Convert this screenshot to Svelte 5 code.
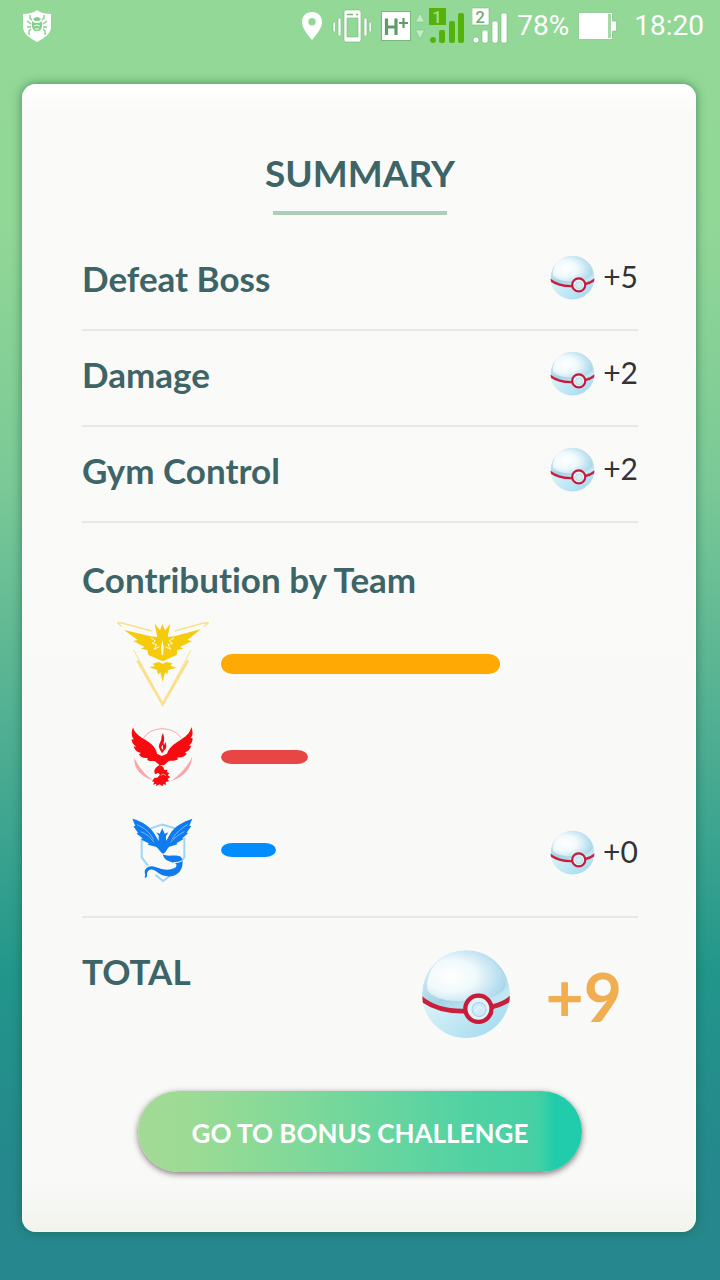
<script>
  const rewards = [
    { label: 'Defeat Boss', value: '+5' },
    { label: 'Damage', value: '+2' },
    { label: 'Gym Control', value: '+2' },
  ];
  const teams = [
    { name: 'instinct', share: 88, value: '' },
    { name: 'valor', share: 27.5, value: '' },
    { name: 'mystic', share: 17.5, value: '+0' },
  ];
</script>

{#snippet ball(id)}
  <svg class="ball" viewBox="65 58 266 268" aria-hidden="true">
    <defs>
      <linearGradient id="{id}-body" x1="0.2" y1="0" x2="0.75" y2="1">
        <stop offset="0" stop-color="#e3f3f7" />
        <stop offset="0.45" stop-color="#a5d3e6" />
        <stop offset="0.7" stop-color="#c3e8f3" />
        <stop offset="1" stop-color="#a9ddf1" />
      </linearGradient>
      <radialGradient id="{id}-top" cx="0.3" cy="0.5" r="0.8">
        <stop offset="0" stop-color="#ffffff" />
        <stop offset="0.4" stop-color="#f0f9fb" />
        <stop offset="1" stop-color="#98d0e8" />
      </radialGradient>
      <linearGradient id="{id}-low" x1="0" y1="0" x2="1" y2="0.6">
        <stop offset="0" stop-color="#e4f5f8" />
        <stop offset="0.5" stop-color="#c4e9f4" />
        <stop offset="1" stop-color="#a5daf0" />
      </linearGradient>
      <clipPath id="{id}-clip"><circle cx="198" cy="192" r="131" /></clipPath>
    </defs>
    <g clip-path="url(#{id}-clip)">
      <circle cx="198" cy="192" r="131" fill="url(#{id}-body)" />
      <path d="M60 203C95 240 150 246 198 243C260 241 310 225 335 200V330H60Z" fill="url(#{id}-low)" />
      <path d="M82 178C80 105 135 64 198 64C262 64 312 105 317 165C310 190 285 196 272 202C255 183 215 183 200 211C150 218 95 206 82 178Z" fill="url(#{id}-top)" />
      <path d="M62 204C98 234 150 245 200 243M272 231C295 226 318 216 334 202" fill="none" stroke="#c91f3c" stroke-width="14" />
    </g>
    <circle cx="235" cy="236" r="39" fill="#dff3f9" stroke="#c91a39" stroke-width="13" />
    <circle cx="237" cy="238" r="21" fill="#cfebf6" stroke="#a4d0e6" stroke-width="3" />
    <path d="M226 244L238 229L249 238" fill="none" stroke="#e4f5fb" stroke-width="4" />
  </svg>
{/snippet}

{#snippet reward(id, value)}
  <span class="reward">{@render ball(id)}<span>{value}</span></span>
{/snippet}

<div class="screen">
  <header class="status">
    <svg class="shield" viewBox="0 0 30 34" aria-hidden="true">
      <path d="M15 1C19 4 24 5 29 5V18C29 25 22 29 15 33C8 29 1 25 1 18V5C6 5 11 4 15 1Z" fill="#fff" />
      <g fill="none" stroke="#85cf8d" stroke-width="1.4">
        <path d="M10 11L8 9V6M20 11L22 9V6M9 15L5 12M21 15L25 12M9 18H5M21 18H25M9 20L7 22V26M21 20L23 22V26" />
      </g>
      <path d="M11 10Q15 6 19 10L17 12H13ZM10 12L13 14H17L20 12Q21 20 17 22H13Q9 20 10 12Z" fill="#85cf8d" />
      <path d="M12 17Q15 15 18 17M13 20H17" stroke="#fff" fill="none" />
    </svg>

    <div class="indicators">
      <svg width="22" height="30" viewBox="0 0 22 30" aria-hidden="true">
        <path fill="#fff" fill-rule="evenodd" d="M11 1C5 1 1 5 1 11C1 17 6 23 11 29C16 23 21 17 21 11C21 5 17 1 11 1ZM11 7A3.700 3.700 0 1 1 11 14.400A3.700 3.700 0 1 1 11 7Z" />
      </svg>
      <svg width="40" height="34" viewBox="0 0 40 34" aria-hidden="true">
        <g stroke="#76b67b" stroke-width="0.6" fill="#fff">
          <rect x="1" y="13" width="2.400" height="10" rx="1" />
          <rect x="6" y="9" width="3" height="18" rx="1" />
          <rect x="32" y="9" width="3" height="18" rx="1" />
          <rect x="37" y="13" width="2.400" height="10" rx="1" />
          <path fill-rule="evenodd" d="M14 1H27Q29 1 29 3V31Q29 33 27 33H14Q12 33 12 31V3Q12 1 14 1ZM15 9V28H26V9Z" />
        </g>
        <path d="M15 5.500H21M24 5.500H26" stroke="#76b67b" stroke-width="1.500" />
      </svg>
      <div class="tight">
        <svg width="30" height="30" viewBox="0 0 30 30" aria-hidden="true">
          <rect x="0.500" y="0.500" width="29" height="29" fill="#fff" stroke="#79b87e" />
          <path d="M5.500 7.500V24M15 7.500V24M5.500 16H15" stroke="#619c67" stroke-width="3.200" fill="none" />
          <path d="M18 12H27M22.500 7V17" stroke="#619c67" stroke-width="2.200" fill="none" />
        </svg>
        <svg width="10" height="28" viewBox="0 0 10 28" aria-hidden="true">
          <path d="M0.500 10L5 1L9.500 10ZM0.500 18L5 27L9.500 18Z" fill="#c4edc3" stroke="#80c086" stroke-width="0.600" />
        </svg>
        <svg width="36" height="40" viewBox="0 -2 36 40" aria-hidden="true">
          <g fill="#54b30b">
            <path d="M0 0H17V17H0Z" />
            <circle cx="4" cy="32" r="3" />
            <rect x="10" y="22" width="6" height="13" rx="2" />
            <rect x="20" y="13" width="6" height="22" rx="2" />
            <rect x="29" y="5" width="6" height="30" rx="2" />
          </g>
          <text class="sim" x="8" y="15" fill="#a3dc91">1</text>
        </svg>
      </div>
      <svg width="36" height="40" viewBox="0 -2 36 40" aria-hidden="true">
        <g fill="#fff" stroke="#79b87e" stroke-width="0.600">
          <path d="M0 0H17V17H0Z" />
          <circle cx="4" cy="32" r="3" />
          <rect x="10" y="22" width="6" height="13" rx="2" />
          <rect x="20" y="13" width="6" height="22" rx="2" />
          <rect x="29" y="5" width="6" height="30" rx="2" />
        </g>
        <text class="sim" x="8" y="15" fill="#70aa76">2</text>
      </svg>
      <span>78%</span>
      <svg width="39" height="28" viewBox="0 0 39 28" aria-hidden="true">
        <path d="M0.500 0.500H34.500V9H38.500V19H34.500V27.500H0.500Z" fill="#fff" stroke="#79b87e" stroke-width="0.600" />
        <rect x="30" y="2" width="3" height="24" fill="#a5d9a5" />
      </svg>
      <time>18:20</time>
    </div>
  </header>

  <main class="card">
    <h1>SUMMARY</h1>

    <ul class="rows">
      {#each rewards as item, i}
        <li>
          <span class="label">{item.label}</span>
          {@render reward(`reward${i}`, item.value)}
        </li>
      {/each}
    </ul>

    <section class="teams">
      <h2>Contribution by Team</h2>
      {#each teams as team}
        <div class="team">
          <span class="emblem">
            {#if team.name === 'instinct'}
              <svg width="92" height="86" viewBox="51 30 276 258" aria-hidden="true">
                <g fill="none" stroke="#f9e08c" stroke-width="4">
                  <path d="M66 47L52 36L66 36L155 60M311 47L325 36L311 36L224 60" />
                  <path d="M101 117L188 278L273 117" stroke-width="3" />
                  <path d="M112 148L188 280L264 148" stroke-width="8" />
                </g>
                <path fill="#f5cb0c" d="M72 57L152 76L172 78L164 38L180 58L187 39L195 58L211 38L203 78L223 76L302 55L262 87L276 90L240 108L250 113L232 117L230 132L188 151L145 132L142 117L122 113L134 108L100 90L113 87Z" />
                <path fill="#f5cb0c" d="M158 158L176 153L188 158L200 153L218 157L211 164L229 170L204 177L202 190L195 184L188 213L181 184L174 191L171 177L147 169L165 165Z" />
                <path fill="none" stroke="#fffbe5" stroke-width="3" d="M152 80L166 90L156 97L170 101L162 115L178 107M222 80L208 90L218 97L204 101L212 115L196 107" />
                <path fill="#fffbe5" d="M187 88L191 108L189 132H185L183 108Z" />
              </svg>
            {:else if team.name === 'valor'}
              <svg width="66" height="66" viewBox="30 30 198 198" aria-hidden="true">
                <path fill="none" stroke="#f8a9ae" stroke-width="3" d="M71 72Q86 46 126 44Q168 45 184 73" />
                <path fill="#f9a5ab" d="M43 131Q40 178 98 199Q61 172 43 131ZM216 129Q213 181 152 202Q197 170 216 129Z" />
                <path fill="#f80b10" d="M39 40C45 64 69 72 86 84C103 96 109 108 111 119L125 126L141 119C146 102 161 90 178 80C196 69 210 58 214 39C221 58 217 67 212 72L218 73C218 83 214 91 207 94L213 96C210 108 202 113 195 115L200 120C193 129 181 132 172 130L174 136C161 143 150 139 145 142L132 154H119L107 143C99 139 91 144 82 138L83 132C68 133 60 129 57 121L63 117C49 114 44 107 41 97L49 98C39 91 35 85 35 75L42 77C33 67 34 52 39 40Z" />
                <path fill="#f80b10" d="M129 57C121 72 127 74 121 84C116 92 115 100 120 107L126 118L132 110C140 104 141 94 136 84L132 94C129 88 134 78 132 69Z" />
                <path fill="#fff" d="M127 92C122 99 124 104 130 107C127 100 131 97 127 92Z" />
                <path fill="#f80b10" d="M119 153C105 160 98 172 107 181L114 176L120 182L112 191L104 191L96 202L103 204L99 212L109 209L108 216L119 211L127 217L130 211L138 212L137 204L147 202L143 194L151 190L143 183L148 178L140 173L143 167L133 168L130 159Z" />
                <path d="M122 184L130 180L138 185" stroke="#f9d7d4" fill="none" stroke-width="2" />
              </svg>
            {:else}
              <svg width="66" height="66" viewBox="30 34 198 198" aria-hidden="true">
                <path fill="none" stroke="#9ed6f6" stroke-width="6" d="M91 68L127 57L165 68M65 96V155L84 180M106 207L129 226L150 211M177 174L193 155V96" />
                <path fill="#0e7cf0" d="M37 39C67 47 91 62 105 87L116 106V90L109 80L119 84L127 68L134 84L145 80L138 91V106L149 87C162 62 190 48 217 39L208 60L214 61L200 81L204 83L187 98L190 101L170 112L172 116L148 123C139 131 139 140 129 144C119 139 119 129 107 123L84 117L86 113L64 102L68 98L50 84L54 81L40 62L46 61Z" />
                <path fill="none" stroke="#cfe6fb" stroke-width="1.600" d="M51 57C72 66 90 80 100 101M62 78C80 84 92 95 102 110M203 57C184 67 167 82 156 101M193 78C175 87 162 97 152 110" />
                <path fill="#0e7cf0" d="M128 146C145 155 165 145 182 153C193 162 188 193 174 203C153 220 126 211 111 199C98 186 81 190 81 205C83 212 79 217 74 216C74 211 77 211 75 205C70 188 88 177 106 184C127 192 147 195 162 188C170 184 172 178 166 173C152 168 134 168 128 146Z" />
                <path d="M160 171Q174 172 187 165" stroke="#f4fafc" stroke-width="3" fill="none" />
              </svg>
            {/if}
          </span>
          <span class="track">
            <span class="bar {team.name}" style:width="{team.share}%"></span>
          </span>
          {#if team.value}{@render reward('team', team.value)}{/if}
        </div>
      {/each}
    </section>

    <section class="total">
      <h2>TOTAL</h2>
      <div class="sum">
        {@render ball('sum')}
        <strong>+9</strong>
      </div>
    </section>

    <button type="button">GO TO BONUS CHALLENGE</button>
  </main>
</div>

<style>
  :global(body) {
    margin: 0;
  }
  .screen {
    box-sizing: border-box;
    min-height: 100vh;
    padding: 0 24px 48px 22px;
    background: linear-gradient(#93d896 0%, #91d796 18%, #7ac996 38%, #52b093 56%, #22968b 76%, #25898c 90%, #27868e 100%);
    font-family: Lato, "Open Sans", sans-serif;
    font-variant-ligatures: none;
    color: #3d6466;
  }
  .status {
    display: flex;
    justify-content: space-between;
    align-items: center;
    height: 52px;
    margin: 0 -8px 32px 0;
    color: #fff;
    font: 400 28px/32px Roboto, sans-serif;
  }
  .shield {
    width: 30px;
    height: 34px;
  }
  .indicators,
  .tight {
    display: flex;
    align-items: center;
    gap: 9px;
  }
  .tight {
    gap: 4px;
    margin-right: -2px;
  }
  .indicators time {
    margin-left: 8px;
  }
  .sim {
    font: 500 17px Roboto, sans-serif;
    text-anchor: middle;
  }
  svg {
    display: block;
    flex: none;
  }
  .card {
    display: flex;
    flex-direction: column;
    padding: 67px 58px 60px 60px;
    border-radius: 14px;
    background: linear-gradient(#fff 0, #fafbf8 28px, #f9faf8 calc(100% - 50px), #f1f3eb 100%);
    box-shadow: 0 0 8px 1px rgba(20, 90, 60, 0.5), inset 0 0 3px #fff;
  }
  h1,
  h2,
  .label {
    margin: 0;
    font-size: 35px;
    line-height: 44px;
    font-weight: 700;
  }
  h1 {
    font-size: 37px;
    text-align: center;
  }
  h1::after {
    content: "";
    display: block;
    width: 174px;
    height: 4px;
    margin: 16px auto 20px;
    background: #abceb9;
  }
  .rows {
    margin: 0;
    padding: 0;
    list-style: none;
  }
  .rows li {
    display: flex;
    justify-content: space-between;
    align-items: center;
    box-sizing: border-box;
    height: 96px;
    padding-bottom: 10px;
    border-bottom: 2px solid #e6e9e6;
  }
  .label {
    padding-top: 2px;
  }
  .reward {
    display: flex;
    align-items: center;
    gap: 8px;
    font-size: 30px;
    line-height: 36px;
    color: #333;
  }
  .reward > span {
    padding-bottom: 3px;
  }
  .reward .ball {
    width: 45px;
    height: 45px;
  }
  .teams {
    padding: 34px 0 20px;
    border-bottom: 2px solid #e6e9e6;
  }
  .teams h2 {
    margin-bottom: 16px;
  }
  .team {
    display: grid;
    grid-template-columns: 92px 1fr 88px;
    align-items: center;
    column-gap: 12px;
    height: 93px;
    padding-left: 35px;
  }
  .team .reward {
    padding-top: 6px;
  }
  .emblem {
    display: flex;
    justify-content: center;
  }
  .bar {
    display: block;
    height: 14px;
    border-radius: 11px / 50%;
  }
  .instinct {
    height: 20px;
    background: #ffa904;
  }
  .valor {
    background: #e84545;
  }
  .mystic {
    background: #028dff;
  }
  .total {
    display: flex;
    justify-content: space-between;
    padding: 31px 16px 52px 0;
  }
  .sum {
    display: flex;
    align-items: center;
    gap: 34px;
  }
  .sum .ball {
    width: 90px;
    height: 90px;
  }
  .sum strong {
    padding-top: 6px;
    font-size: 66px;
    line-height: 72px;
    font-weight: 700;
    color: #f0ae50;
  }
  button {
    align-self: center;
    padding: 22px 54px 19px;
    border: 0;
    border-radius: 41px;
    background: linear-gradient(90deg, #a3da95 0, #9cdb94 12%, #7bd89a 40%, #50d2a3 75%, #45d0a4 90%, #20ccac 94%, #20ccac 100%);
    box-shadow: 0 2px 6px rgba(70, 40, 50, 0.65);
    color: #fff;
    font: 700 26px/40px Lato, "Open Sans", sans-serif;
    cursor: pointer;
  }
</style>
